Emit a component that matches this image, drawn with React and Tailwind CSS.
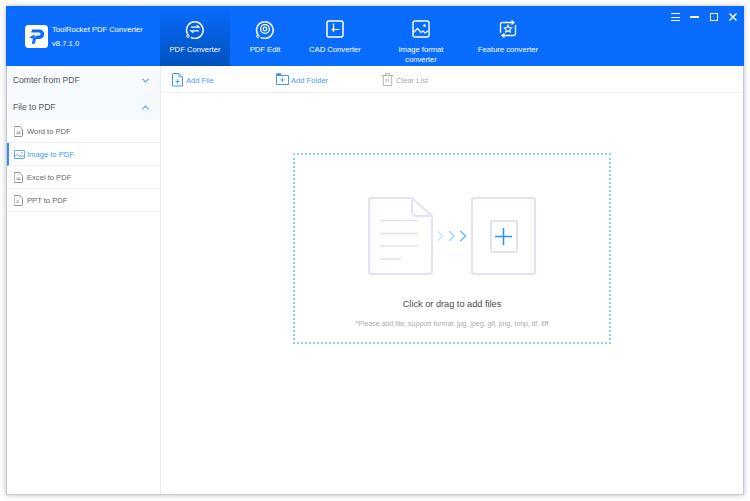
import { ChevronDown, ChevronUp } from 'lucide-react'

const font = { fontFamily: '"Liberation Sans", Arial, sans-serif' }

function Logo() {
  return (
    <svg width="23" height="23" viewBox="0 0 23 23">
      <rect width="23" height="23" rx="3.5" fill="#fff" />
      <path d="M7 4.5h7.500a4.600 4.600 0 0 1 0 9.400H11l-1.200 4.800H6.800L8 13.600l3.600-3.200h2.600a1.400 1.400 0 0 0 0-2.800H6.200z" fill="#0a6cff" />
      <path d="M4 12.500l6-3.200-1 4.600z" fill="#0a6cff" />
    </svg>
  )
}

function ConverterIcon() {
  return (
    <svg width="20" height="20" viewBox="0 0 20 20" fill="none" stroke="#fff">
      <path d="M3.200 16a8.300 8.300 0 1 1 2.600 2.300" strokeWidth="1.500" />
      <circle cx="2.900" cy="17.200" r="1.300" strokeWidth="1" />
      <path d="M6 8.200h8l-2.200-2M14 11.800H6l2.200 2" strokeWidth="1.300" />
    </svg>
  )
}

function EditIcon() {
  return (
    <svg width="20" height="20" viewBox="0 0 20 20" fill="none" stroke="#fff">
      <path d="M3.200 16a8.300 8.300 0 1 1 2.600 2.300" strokeWidth="1.500" />
      <circle cx="2.900" cy="17.200" r="1.300" strokeWidth="1" />
      <circle cx="10" cy="10" r="4.400" strokeWidth="1.300" />
      <circle cx="10" cy="10" r="1.800" strokeWidth="1.200" />
    </svg>
  )
}

function CadIcon() {
  return (
    <svg width="18" height="18" viewBox="0 0 18 18" fill="none" stroke="#fff">
      <rect x="1" y="1" width="16" height="16" rx="2" strokeWidth="1.500" />
      <path d="M7.500 3.500v8.500M13.500 9.500H5.500" strokeWidth="1.200" />
      <circle cx="7.500" cy="9.500" r="1.300" fill="#fff" stroke="none" />
    </svg>
  )
}

function ImageIcon() {
  return (
    <svg width="18" height="18" viewBox="0 0 18 18" fill="none" stroke="#fff">
      <rect x="1" y="1" width="16" height="16" rx="2" strokeWidth="1.400" />
      <circle cx="12.500" cy="5.600" r="1.300" fill="#fff" stroke="none" />
      <path d="M1.500 12.500l4-4 3.500 4 2-1.500 2 2 3-2" strokeWidth="1.200" />
    </svg>
  )
}

function FeatureIcon() {
  return (
    <svg width="18" height="18" viewBox="0 0 18 18" fill="none" stroke="#fff">
      <path d="M1.500 13V4.200c0-1 .7-1.700 1.700-1.700H14M12.500.6l2.400 1.900-2.400 1.900" strokeWidth="1.300" />
      <path d="M16.500 5v8.800c0 1-.7 1.700-1.700 1.700H4M5.500 13.600l-2.400 1.900 2.400 1.900" strokeWidth="1.300" />
      <path d="M9 5.300l1.100 2.300 2.500.3-1.800 1.700.5 2.500L9 10.900l-2.300 1.200.5-2.500-1.800-1.700 2.500-.3z" strokeWidth="1.100" />
    </svg>
  )
}

function SmallDoc({ label, color = '#777' }) {
  return (
    <svg width="9" height="11" viewBox="0 0 9 11" fill="none" stroke={color} strokeWidth="0.8">
      <path d="M.9.5h4.800l2.800 2.800v6.400a.8.800 0 0 1-.8.800H.9a.8.800 0 0 1-.8-.8V1.300A.8.800 0 0 1 .9.500z" />
      <path d={label} strokeWidth="1" opacity="0.7" />
    </svg>
  )
}

function SmallImage() {
  return (
    <svg width="11" height="9" viewBox="0 0 11 9" fill="none" stroke="#3d9bf5" strokeWidth="0.8">
      <rect x="0.5" y="0.5" width="10" height="8" rx="0.5" />
      <circle cx="7.800" cy="2.600" r="0.7" fill="#3d9bf5" stroke="none" />
      <path d="M.7 6.500l2.500-2.200 2.200 2.200 1.300-1 1.500 1.200 2-1" />
    </svg>
  )
}

function AddFileIcon() {
  return (
    <svg width="11" height="14" viewBox="0 0 11 14" fill="none" stroke="#2f8ff0">
      <path d="M1 .5h6l3.500 3.500v9H.5V1z" strokeWidth="0.9" />
      <path d="M7 .5V4h3.500" strokeWidth="0.8" />
      <path d="M5.500 6.300v4.400M3.300 8.500h4.400" strokeWidth="0.8" />
    </svg>
  )
}

function AddFolderIcon() {
  return (
    <svg width="13" height="12" viewBox="0 0 13 12" fill="none" stroke="#2f8ff0">
      <path d="M.5 2.500h12v9H.5z" strokeWidth="0.9" />
      <path d="M.5 2.500V.6h4l1 1.900z" fill="#2f8ff0" strokeWidth="0.5" />
      <path d="M6.500 4.800v4.400M4.300 7h4.400" strokeWidth="0.8" />
    </svg>
  )
}

function TrashIcon() {
  return (
    <svg width="11" height="13" viewBox="0 0 11 13" fill="none" stroke="#aaa">
      <path d="M0 2.500h11M3.500 2.500V.6h4v1.900" strokeWidth="0.9" />
      <path d="M1.300 2.500v10h8.400v-10" strokeWidth="0.9" />
      <path d="M4.300 5.500v4M6.700 5.500v4" strokeWidth="0.8" />
    </svg>
  )
}

const tabs = [
  { label: 'PDF Converter', icon: <ConverterIcon />, width: 'w-[70px]', active: true },
  { label: 'PDF Edit', icon: <EditIcon />, width: 'w-[70px]' },
  { label: 'CAD Converter', icon: <CadIcon />, width: 'w-[70px]' },
  { label: 'Image format converter', icon: <ImageIcon />, width: 'w-[102px]' },
  { label: 'Feature converter', icon: <FeatureIcon />, width: 'w-[72px]' },
]

const subItems = [
  { label: 'Word to PDF', icon: <SmallDoc label="M2.500 6h4M2.500 7.500h4" /> },
  { label: 'Image to PDF', icon: <SmallImage />, active: true },
  { label: 'Excel to PDF', icon: <SmallDoc label="M2.500 6h4M2.500 7.500h4" /> },
  { label: 'PPT to PDF', icon: <SmallDoc label="M2.500 6h2.500M2.500 7.500h2" /> },
]

export default function App() {
  return (
    <div style={font} className="w-[750px] h-[501px] bg-white pl-[6px] pt-[6px] overflow-hidden">
      <div className="w-[738px] h-[489px] flex flex-col bg-white border-r border-b border-l-[1px] border-[#c3cad3] shadow-[0_0_5px_rgba(120,130,145,0.55)]">
        {/* Header */}
        <div className="h-[60px] shrink-0 flex bg-[#0a6cff] text-white -mx-px">
          <div className="w-[154px] flex items-center pl-[19px] pt-[1px]">
            <Logo />
            <div className="ml-[4px] mt-[1px] text-[7.650px] leading-[14px] whitespace-nowrap">
              <div>ToolRocket PDF Converter</div>
              <div>v8.7.1.0</div>
            </div>
          </div>

          {tabs.map(tab => (
            <div
              key={tab.label}
              className={`${tab.width} h-full flex flex-col items-center pt-[13px] ${tab.active ? 'bg-gradient-to-b from-[#0a6cff] to-[#0052bd]' : ''}`}
            >
              <div className="h-[20px] flex items-center justify-center">{tab.icon}</div>
              <div className="mt-[6px] text-[7.650px] leading-[10px] text-center whitespace-nowrap">
                {tab.label === 'Image format converter' ? (
                  <>Image format<br />converter</>
                ) : tab.label}
              </div>
            </div>
          ))}

          {/* Window buttons */}
          <div className="flex-1 flex justify-end items-start gap-[8px] pt-[7px] pr-[7px]">
            <div className="w-[9px] h-[8px] flex flex-col justify-between">
              <span className="h-px bg-white" />
              <span className="h-px bg-white" />
              <span className="h-px bg-white" />
            </div>
            <div className="w-[9px] h-[8px] flex items-center ml-[2px]">
              <span className="w-full h-[1.500px] bg-white" />
            </div>
            <div className="w-[8px] h-[8px] border-[1.500px] border-white ml-[3px]" />
            <svg width="8" height="8" viewBox="0 0 8 8" stroke="#fff" strokeWidth="1.400" className="ml-[3px]">
              <path d="M.5.500l7 7M7.500.500l-7 7" />
            </svg>
          </div>
        </div>

        <div className="flex flex-1 min-h-0">
          {/* Sidebar */}
          <div className="w-[154px] shrink-0 border-r border-[#e8ebef]">
            <div className="bg-[#f6faff]">
              <div className="h-[27px] flex items-center justify-between pl-[6px] pr-[9px] pt-[2px] text-[8.500px] text-[#555]">
                Comter from PDF
                <ChevronDown size={11} color="#4fa3f3" strokeWidth={2.500} />
              </div>
              <div className="h-[27px] flex items-center justify-between pl-[6px] pr-[9px] pt-[1px] text-[8.500px] text-[#555]">
                File to PDF
                <ChevronUp size={11} color="#4fa3f3" strokeWidth={2.500} />
              </div>
            </div>
            {subItems.map(item => (
              <div
                key={item.label}
                className={`h-[23px] flex items-center border-b border-[#eef0f3] pt-[1px] text-[7.600px] ${item.active ? 'border-l-2 border-l-[#2f8ff0] pl-[5px] text-[#3d9bf5]' : 'pl-[7px] text-[#666]'}`}
              >
                <span className="w-[13px] flex">{item.icon}</span>
                {item.label}
              </div>
            ))}
          </div>

          {/* Main */}
          <div className="flex-1 flex flex-col min-w-0">
            <div className="h-[27px] shrink-0 flex items-center pl-[11px] pt-[1px] border-b border-[#eef0f3] text-[7.600px]">
              <div className="w-[104px] flex items-center gap-[3px] text-[#4ba0f2]">
                <AddFileIcon />
                <span className="pt-[2px]">Add File</span>
              </div>
              <div className="w-[106px] flex items-center gap-[2px] text-[#4ba0f2]">
                <AddFolderIcon />
                <span className="pt-[2px]">Add Folder</span>
              </div>
              <div className="flex items-center gap-[3px] text-[#aaa]">
                <TrashIcon />
                <span className="pt-[2px]">Clear List</span>
              </div>
            </div>

            <div className="flex-1 flex justify-center pt-[60px]">
              <div className="w-[318px] h-[191px] flex flex-col items-center border-2 border-dotted border-[#9accf8] pt-[42px]">
                <div className="flex items-center h-[78px]">
                  <svg width="65" height="78" viewBox="0 0 65 78" fill="none" stroke="#dfe4f0" strokeWidth="2">
                    <path d="M4 1h40L64 19v55a3 3 0 0 1-3 3H4a3 3 0 0 1-3-3V4a3 3 0 0 1 3-3z" />
                    <path d="M44 1v14a4 4 0 0 0 4 4h16" />
                    <path d="M12 23.500h38M12 36.500h38M12 49h38M12 62h21" strokeWidth="1.300" />
                  </svg>
                  <svg width="38" height="14" viewBox="0 0 38 14" fill="none" strokeWidth="1.500">
                    <path d="M4.500 2l5 5-5 5" stroke="#cfe6fb" />
                    <path d="M16 2l5 5-5 5" stroke="#aad6f9" />
                    <path d="M27.500 2l5 5-5 5" stroke="#6cb8f6" />
                  </svg>
                  <div className="w-[65px] h-[78px] flex items-center justify-center rounded-[3px] border-2 border-[#dfe4f0]">
                    <div className="w-[28px] h-[33px] flex items-center justify-center rounded-[1px] border-2 border-[#dfe4f0]">
                      <svg width="17" height="17" viewBox="0 0 17 17" stroke="#2a90f2" strokeWidth="1.500">
                        <path d="M8.500 0v17M0 8.500h17" />
                      </svg>
                    </div>
                  </div>
                </div>
                <div className="mt-[23px] text-[9.200px] leading-[13px] text-[#4a4a4a]">Click or drag to add files</div>
                <div className="mt-[8px] text-[7px] leading-[10px] text-[#aaa]">*Please add file, support format: jpg, jpeg, gif, png, bmp, tif, tiff</div>
              </div>
            </div>
          </div>
        </div>
      </div>
    </div>
  )
}
